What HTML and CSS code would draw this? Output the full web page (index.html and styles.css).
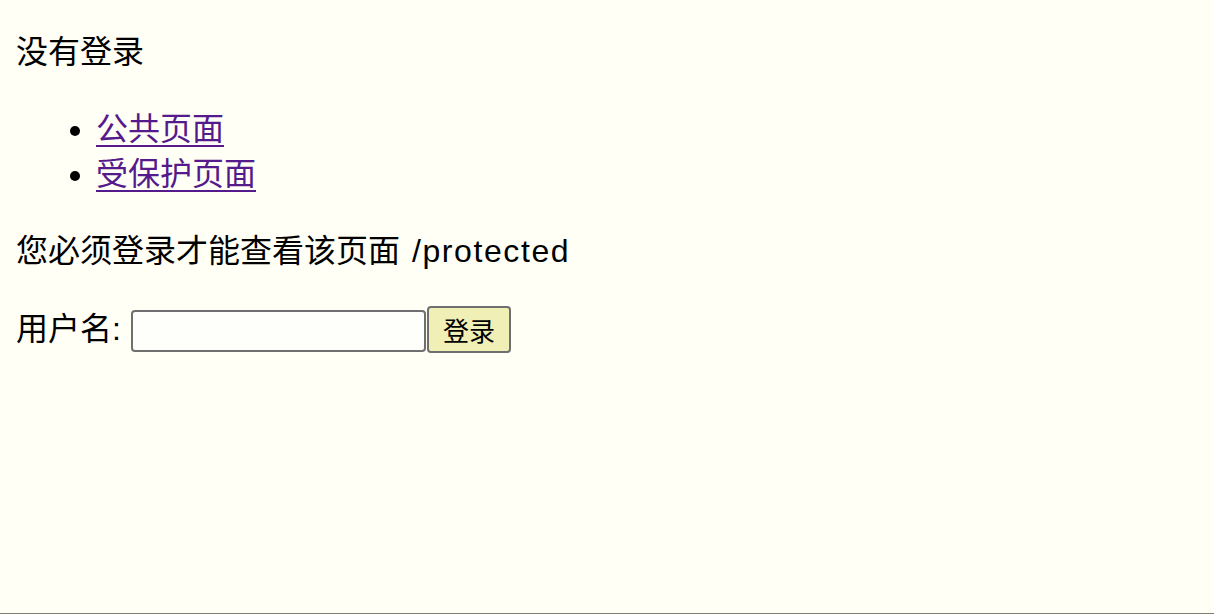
FILE: index.html
```html
<!DOCTYPE html>
<html lang="zh-CN">
<head>
<meta charset="utf-8">
<title>登录</title>
<link rel="stylesheet" href="styles.css">
</head>
<body>
<p class="status">没有登录</p>
<ul class="nav">
  <li><a href="#public">公共页面</a></li>
  <li><a href="#protected">受保护页面</a></li>
</ul>
<p class="notice">您必须登录才能查看该页面 <span class="path">/protected</span></p>
<form class="login">
  <label class="login-label" for="username">用户名:</label>
  <input class="login-input" id="username" type="text">
  <button class="login-button" type="button">登录</button>
</form>
</body>
</html>
```
FILE: styles.css
```css
html {
  height: 100vh;
  box-sizing: border-box;
  border-bottom: 1px solid #7d7d70;
  background: #fffff6;
}
body {
  margin: 0 16px;
  padding: 0;
  font-family: "Liberation Sans", "Noto Sans CJK SC", sans-serif;
  font-size: 32px;
  line-height: 45px;
  color: #000;
}
.status {
  margin: 30px 0 32px;
}
.notice {
  margin: 32px 0;
}
.path {
  letter-spacing: 1.6px;
  margin-left: 3px;
}
.nav {
  margin: 32px 0;
  padding-left: 80px;
}
.nav a {
  color: #551a8b;
  text-decoration: underline;
  text-decoration-thickness: 2px;
  text-underline-offset: 5px;
}
.login {
  display: flex;
  align-items: center;
  margin: 31px 0;
}
.login-label {
  margin-right: 10px;
}
.login-input {
  box-sizing: border-box;
  width: 295px;
  height: 42px;
  margin: 2px 0 0;
  border: 2px solid #6f6f6f;
  border-radius: 4px;
  background: #fefefa;
  padding: 2px 4px;
  font-size: 26px;
}
.login-button {
  box-sizing: border-box;
  width: 84px;
  height: 47px;
  margin: 0 0 0 1px;
  border: 2px solid #6f6f6f;
  border-radius: 4px;
  background: #efefb6;
  font-family: "Liberation Sans", "Noto Sans CJK SC", sans-serif;
  font-size: 26px;
  color: #000;
  padding: 0;
}
```
